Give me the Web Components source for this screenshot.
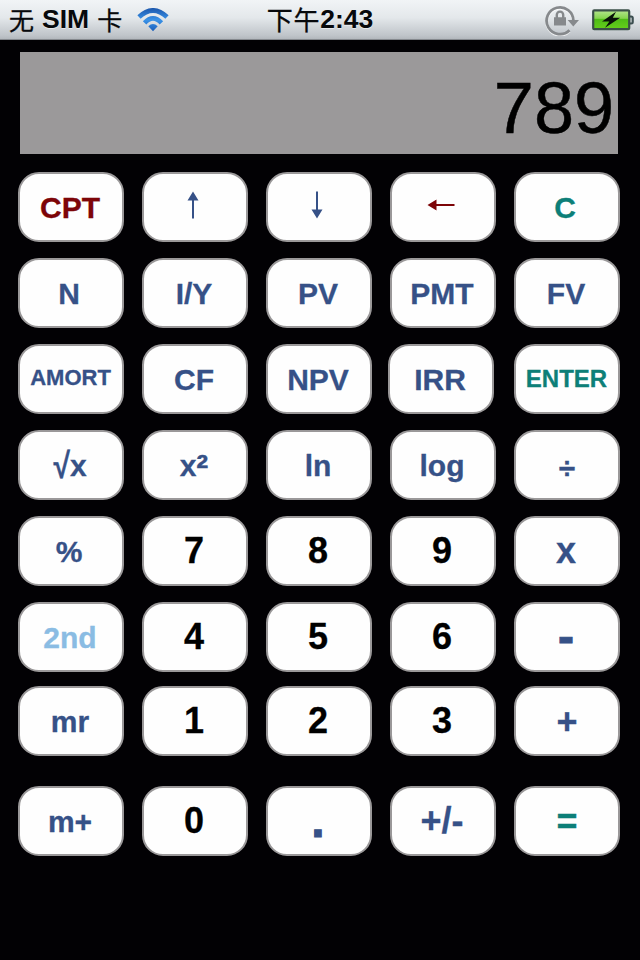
<!DOCTYPE html>
<html lang="zh-CN">
<head>
<meta charset="utf-8">
<title>Calculator</title>
<style>
	body {
		margin: 0;
		background: #020104;
		font-family: "Liberation Sans", "Noto Sans CJK SC", sans-serif;
	}
	.root {
		display: inline-block;
		transform: scaleY(1.18);
	}
	.square {
		font-size: 36px;
		line-height: 0;
		vertical-align: -4px;
	}
</style>
</head>
<body>
<calc-app>
	<status-bar slot="status" carrier="SIM" time="2:43"></status-bar>
	<calc-display slot="display">789</calc-display>

	<calc-row>
		<calc-key tone="red">CPT</calc-key>
		<calc-key><arrow-icon direction="up"></arrow-icon></calc-key>
		<calc-key><arrow-icon direction="down"></arrow-icon></calc-key>
		<calc-key tone="red"><arrow-icon direction="left"></arrow-icon></calc-key>
		<calc-key tone="green" style="--shift: -4px">C</calc-key>
	</calc-row>
	<calc-row>
		<calc-key style="--shift: -4px">N</calc-key>
		<calc-key>I/Y</calc-key>
		<calc-key>PV</calc-key>
		<calc-key>PMT</calc-key>
		<calc-key>FV</calc-key>
	</calc-row>
	<calc-row>
		<calc-key size="small" style="--shift: -1px">AMORT</calc-key>
		<calc-key>CF</calc-key>
		<calc-key>NPV</calc-key>
		<calc-key style="margin: 0 2px 0 -2px">IRR</calc-key>
		<calc-key size="medium" tone="green" style="--shift: -1px">ENTER</calc-key>
	</calc-row>
	<calc-row>
		<calc-key><span class="root">√</span>x</calc-key>
		<calc-key>x<span class="square">²</span></calc-key>
		<calc-key>ln</calc-key>
		<calc-key>log</calc-key>
		<calc-key style="--drop: 2px; --shift: 0px">÷</calc-key>
	</calc-row>
	<calc-row>
		<calc-key style="--shift: -4px">%</calc-key>
		<calc-key size="large" tone="black">7</calc-key>
		<calc-key size="large" tone="black">8</calc-key>
		<calc-key size="large" tone="black">9</calc-key>
		<calc-key size="large">x</calc-key>
	</calc-row>
	<calc-row>
		<calc-key tone="light">2nd</calc-key>
		<calc-key size="large" tone="black">4</calc-key>
		<calc-key size="large" tone="black">5</calc-key>
		<calc-key size="large" tone="black">6</calc-key>
		<calc-key size="huge">-</calc-key>
	</calc-row>
	<calc-row style="margin-top: 14px">
		<calc-key>mr</calc-key>
		<calc-key size="large" tone="black">1</calc-key>
		<calc-key size="large" tone="black">2</calc-key>
		<calc-key size="large" tone="black">3</calc-key>
		<calc-key size="large" style="--drop: 1px; --shift: 0px">+</calc-key>
	</calc-row>
	<calc-row style="margin-top: 30px">
		<calc-key>m+</calc-key>
		<calc-key size="large" tone="black">0</calc-key>
		<calc-key size="huge">.</calc-key>
		<calc-key size="large">+/-</calc-key>
		<calc-key size="large" tone="green" style="--drop: 1px; --shift: 0px">=</calc-key>
	</calc-row>
</calc-app>

<script>
/**
 * Base class, fills an open shadow root from the static html of the subclass
 */
class CalcElement extends HTMLElement {
	constructor() {
		super();
		this.attachShadow( { mode: 'open' } ).innerHTML = this.constructor.html;
	}
}

/**
 * Page frame: status bar, display, then the rows of keys
 */
class CalcApp extends CalcElement {
	static html = `
<style>
	:host {
		display: flex;
		flex-direction: column;
		width: 640px;
		height: 960px;
		overflow: hidden;
		background: #020104;
	}
	.keys {
		display: flex;
		flex-direction: column;
		padding: 2px 18px 0;
	}
</style>
<slot name="status"></slot>
<slot name="display"></slot>
<div class="keys"><slot></slot></div>
`;
}
customElements.define( 'calc-app', CalcApp );

class StatusBar extends CalcElement {
	static html = `
<style>
	:host {
		display: grid;
		grid-template-columns: 1fr auto 1fr;
		box-sizing: border-box;
		height: 40px;
		padding: 0 6px 0 9px;
		border-bottom: 1px solid #85898e;
		background: linear-gradient(#f1f4f6, #e4e8eb 45%, #c0c5ca 90%, #b3b8bd);
		font-size: 26.5px;
		line-height: 39px;
		color: #07090c;
		white-space: nowrap;
	}
	div {
		display: flex;
		align-items: center;
		height: 39px;
	}
	.cjk {
		font-family: "Noto Sans CJK SC", sans-serif;
		font-size: 25px;
		line-height: 38px;
		padding-bottom: 1px;
		-webkit-text-stroke: .3px currentColor;
	}
	b { text-shadow: 0 1px 0 rgba(255, 255, 255, .5); }
	.carrier { gap: 8px; }
	.wifi { margin-left: 7px; }
	.time { margin-right: 3px; }
	.time .cjk { font-size: 26px; letter-spacing: .8px; }
	.right { justify-content: flex-end; gap: 12px; }
	svg { display: block; }
</style>
<div class="carrier">
	<span class="cjk">无</span><b id="carrier"></b><span class="cjk">卡</span>
	<svg class="wifi" width="32" height="24" viewBox="0 0 32 24">
		<defs><linearGradient id="blue" x1="0" y1="0" x2="0" y2="24" gradientUnits="userSpaceOnUse">
			<stop offset="0" stop-color="#1c57ac"/><stop offset=".5" stop-color="#3a93e8"/><stop offset="1" stop-color="#1759b5"/>
		</linearGradient></defs>
		<g fill="none" stroke="url(#blue)" stroke-width="4.8">
			<path d="M2 9Q16 -4 30 9"/>
			<path d="M7.6 14.8Q16 6 24.4 14.8"/>
		</g>
		<path fill="url(#blue)" d="M11.3 18.3Q16 13.6 20.7 18.3L16 23.3Z"/>
	</svg>
</div>
<div class="time"><span class="cjk">下午</span><b id="time"></b></div>
<div class="right">
	<svg width="35" height="32" viewBox="0 0 35 32">
		<g fill="none" stroke="#fff" stroke-opacity=".7" stroke-width="3" transform="translate(0 1)">
			<path d="M24.5 26.2A13.4 13.4 0 1 1 28.2 14"/>
		</g>
		<g fill="none" stroke="#86898c">
			<path stroke-width="2.8" d="M24.5 26.2A13.4 13.4 0 1 1 28.4 17"/>
			<path stroke-width="2.4" d="M11.8 14V10.8a3.2 3.2 0 0 1 6.4 0V14"/>
		</g>
		<path fill="#86898c" d="M9 13.3H21V21.5H9ZM22.6 16H34L28.3 22.4Z"/>
	</svg>
	<svg width="42" height="22" viewBox="0 0 42 22">
		<defs><linearGradient id="green" x1="0" y1="0" x2="0" y2="1">
			<stop offset="0" stop-color="#b4e58e"/><stop offset=".42" stop-color="#85d54e"/><stop offset=".48" stop-color="#4fbd16"/><stop offset="1" stop-color="#66cf1c"/>
		</linearGradient></defs>
		<path fill="#b9c0c3" stroke="#3c4e50" stroke-width="2" d="M37 7.5H39.2Q40.8 7.5 40.8 9V13Q40.8 14.5 39.2 14.5H37Z"/>
		<rect x="1.2" y="1.4" width="36" height="18.8" rx="1" fill="url(#green)" stroke="#3a4f47" stroke-width="2.2"/>
		<path fill="#081008" d="M24 2.8L10 12.6H17.4L13 18.8L28.2 8.8H20.8Z"/>
	</svg>
</div>
`;
	connectedCallback() {
		this.shadowRoot.querySelector( '#carrier' ).textContent = this.getAttribute( 'carrier' );
		this.shadowRoot.querySelector( '#time' ).textContent = this.getAttribute( 'time' );
	}
}
customElements.define( 'status-bar', StatusBar );

class CalcDisplay extends CalcElement {
	static html = `
<style>
	:host {
		display: block;
		box-sizing: border-box;
		height: 102px;
		margin: 12px 22px 0 20px;
		padding-right: 4px;
		background: #9b999a;
		color: #000;
		font-size: 72px;
		line-height: 113px;
		text-align: right;
		-webkit-text-stroke: .5px currentColor;
	}
</style>
<slot></slot>
`;
}
customElements.define( 'calc-display', CalcDisplay );

class CalcRow extends CalcElement {
	static html = `
<style>
	:host {
		display: grid;
		grid-template-columns: repeat(5, 106px);
		gap: 18px;
		height: 70px;
		margin-top: 16px;
	}
</style>
<slot></slot>
`;
}
customElements.define( 'calc-row', CalcRow );

/**
 * One key. The line height of each size sets where the label's baseline falls,
 * --shift and --drop nudge it.
 */
class CalcKey extends CalcElement {
	static html = `
<style>
	:host {
		display: block;
		box-sizing: border-box;
		height: 70px;
		border: 2px solid #9a9899;
		border-radius: 21px;
		background: #fefefe;
		color: #365187;
		font-size: 30px;
		font-weight: bold;
		line-height: 67px;
		text-align: center;
		white-space: nowrap;
		-webkit-text-stroke: .3px currentColor;
	}
	:host([size=small]) { font-size: 22px; line-height: 63px; }
	:host([size=medium]) { font-size: 24px; line-height: 65px; }
	:host([size=large]) { font-size: 36px; line-height: 65px; }
	:host([size=huge]) { font-size: 48px; line-height: 65px; -webkit-text-stroke-width: 1px; }
	:host([tone=red]) { color: #7d0508; }
	:host([tone=green]) { color: #0d7f78; }
	:host([tone=light]) { color: #8abce3; }
	:host([tone=black]) { color: #000; }
	div {
		display: flow-root;
		height: 66px;
		margin-top: var(--drop, 0px);
		margin-left: var(--shift, -2px);
	}
</style>
<div><slot></slot></div>
`;
}
customElements.define( 'calc-key', CalcKey );

/**
 * Thin arrow with a solid head, drawn pointing up and then turned
 */
class ArrowIcon extends CalcElement {
	static html = `
<style>
	:host {
		display: flex;
		justify-content: center;
		padding: 17px 2px 0 0;
	}
	:host([direction=down]) svg { transform: rotate(180deg); }
	:host([direction=left]) svg { transform: rotate(-90deg); }
	svg { display: block; }
</style>
<svg width="28" height="28" viewBox="0 0 28 28">
	<path fill="currentColor" d="M14 .5L19.5 9.5H15V27.5H13V9.5H8.5Z"/>
</svg>
`;
}
customElements.define( 'arrow-icon', ArrowIcon );
</script>
</body>
</html>
